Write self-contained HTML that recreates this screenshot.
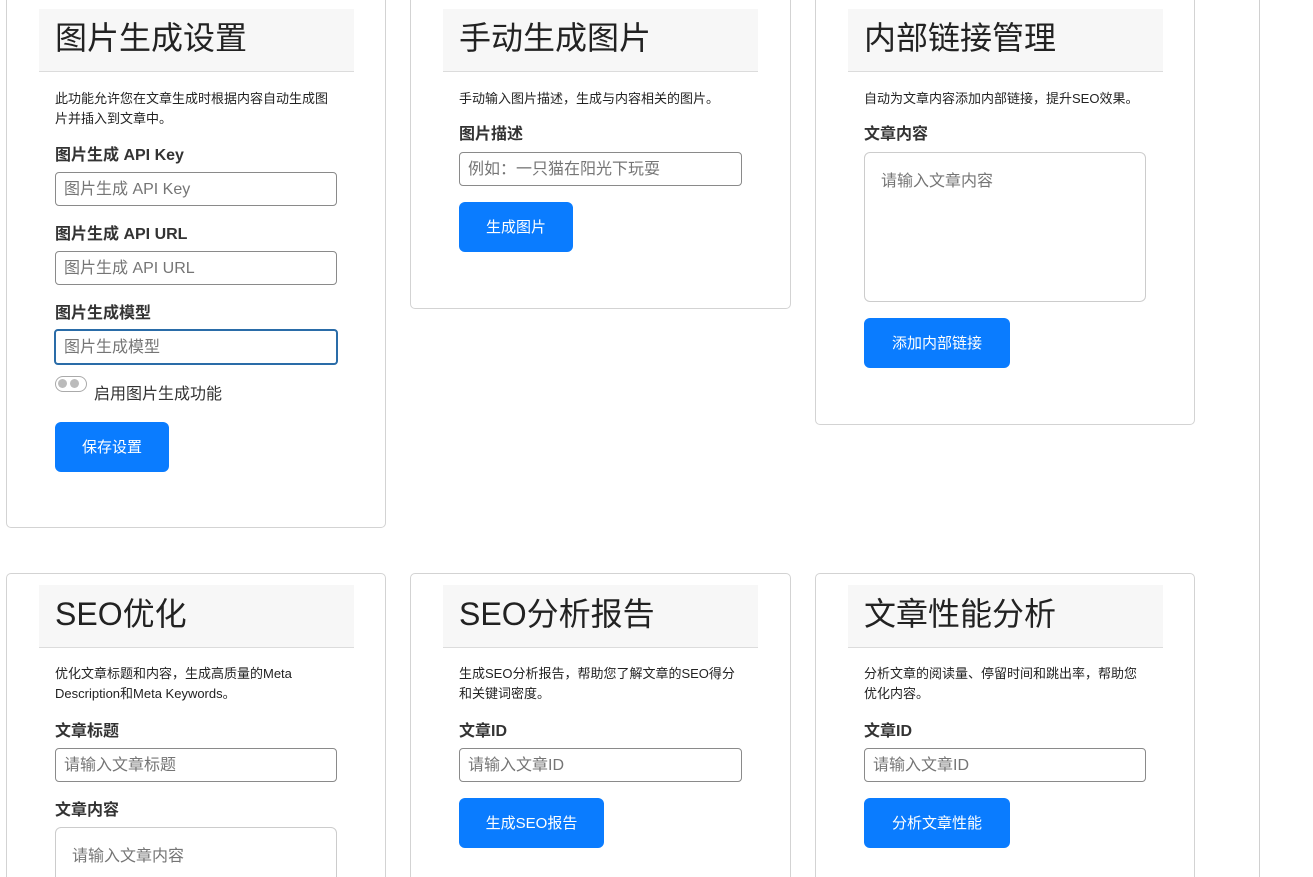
<!DOCTYPE html>
<html><head><meta charset="utf-8"><style>
html,body{margin:0;width:1313px;height:877px;overflow:hidden}
body{background:#fff;position:relative;font-family:"Liberation Sans","Noto Sans CJK SC",sans-serif;color:#212529}
#w{position:absolute;left:0;top:0;width:1313px;height:877px;overflow:hidden}
.a{position:absolute}
.card{position:absolute;border:1px solid #d3d3d3;border-radius:5px;background:#fff;box-sizing:border-box}
.hd{position:absolute;background:#f7f7f7;border-bottom:1px solid #dcdcdc;height:63px;width:315px;box-sizing:border-box}
.hd span{position:absolute;left:16px;top:0;line-height:58px;font-size:32px;color:#222;white-space:nowrap}
.ds{position:absolute;font-size:13px;line-height:19.5px;width:280px;color:#222}
.lb{position:absolute;font-size:16px;font-weight:bold;line-height:20px;color:#333;white-space:nowrap}
.in{position:absolute;border:1px solid #8a8a8a;border-radius:4px;height:34px;box-sizing:border-box;font-size:16px;color:#757575;padding-left:8px;line-height:34px;white-space:nowrap}
.ta{position:absolute;border:1px solid #ccc;border-radius:6px;box-sizing:border-box;font-size:16px;color:#757575;padding:19px 16px;white-space:nowrap}
.bt{position:absolute;background:#0a7cff;color:#fff;border-radius:6px;height:50px;font-size:15px;line-height:52px;text-align:center}
</style></head><body><div id="w">
<div class="a" style="left:1259px;top:0;width:1px;height:877px;background:#d0d0d0"></div>

<div class="card" style="left:6px;top:-10px;width:380px;height:538px"></div>
<div class="hd" style="left:39px;top:9px"><span>图片生成设置</span></div>
<div class="ds" style="left:55px;top:89px">此功能允许您在文章生成时根据内容自动生成图片并插入到文章中。</div>
<div class="lb" style="left:55px;top:146px">图片生成 API Key</div>
<div class="in" style="left:55px;top:172px;width:282px">图片生成 API Key</div>
<div class="lb" style="left:55px;top:225px">图片生成 API URL</div>
<div class="in" style="left:55px;top:251px;width:282px">图片生成 API URL</div>
<div class="lb" style="left:55px;top:304px">图片生成模型</div>
<div class="in" style="left:54px;top:329px;width:284px;height:36px;border:2px solid #2a6ca8;padding-left:8px;line-height:34px">图片生成模型</div>
<div class="a" style="left:55px;top:376px;width:30px;height:14px;border:1px solid #aaa;border-radius:8px"></div>
<div class="a" style="left:58px;top:379px;width:9px;height:9px;border-radius:50%;background:#bbb"></div>
<div class="a" style="left:70px;top:379px;width:9px;height:9px;border-radius:50%;background:#bbb"></div>
<div class="a" style="left:94px;top:385px;font-size:16px;line-height:20px;color:#333">启用图片生成功能</div>
<div class="bt" style="left:55px;top:422px;width:114px">保存设置</div>

<div class="card" style="left:410px;top:-10px;width:381px;height:319px"></div>
<div class="hd" style="left:443px;top:9px"><span>手动生成图片</span></div>
<div class="ds" style="left:459px;top:89px;width:300px">手动输入图片描述，生成与内容相关的图片。</div>
<div class="lb" style="left:459px;top:125px">图片描述</div>
<div class="in" style="left:459px;top:152px;width:283px">例如：一只猫在阳光下玩耍</div>
<div class="bt" style="left:459px;top:202px;width:114px">生成图片</div>

<div class="card" style="left:815px;top:-10px;width:380px;height:435px"></div>
<div class="hd" style="left:848px;top:9px"><span>内部链接管理</span></div>
<div class="ds" style="left:864px;top:89px;width:300px">自动为文章内容添加内部链接，提升SEO效果。</div>
<div class="lb" style="left:864px;top:125px">文章内容</div>
<div class="ta" style="left:864px;top:152px;width:282px;height:150px;line-height:20px">请输入文章内容</div>
<div class="bt" style="left:864px;top:318px;width:146px">添加内部链接</div>

<div class="card" style="left:6px;top:573px;width:380px;height:330px"></div>
<div class="hd" style="left:39px;top:585px"><span>SEO优化</span></div>
<div class="ds" style="left:55px;top:664px">优化文章标题和内容，生成高质量的Meta Description和Meta Keywords。</div>
<div class="lb" style="left:55px;top:722px">文章标题</div>
<div class="in" style="left:55px;top:748px;width:282px">请输入文章标题</div>
<div class="lb" style="left:55px;top:801px">文章内容</div>
<div class="ta" style="left:55px;top:827px;width:282px;height:80px;line-height:20px">请输入文章内容</div>

<div class="card" style="left:410px;top:573px;width:381px;height:330px"></div>
<div class="hd" style="left:443px;top:585px"><span>SEO分析报告</span></div>
<div class="ds" style="left:459px;top:664px">生成SEO分析报告，帮助您了解文章的SEO得分和关键词密度。</div>
<div class="lb" style="left:459px;top:722px">文章ID</div>
<div class="in" style="left:459px;top:748px;width:283px">请输入文章ID</div>
<div class="bt" style="left:459px;top:798px;width:145px">生成SEO报告</div>

<div class="card" style="left:815px;top:573px;width:380px;height:330px"></div>
<div class="hd" style="left:848px;top:585px"><span>文章性能分析</span></div>
<div class="ds" style="left:864px;top:664px;width:280px">分析文章的阅读量、停留时间和跳出率，帮助您优化内容。</div>
<div class="lb" style="left:864px;top:722px">文章ID</div>
<div class="in" style="left:864px;top:748px;width:282px">请输入文章ID</div>
<div class="bt" style="left:864px;top:798px;width:146px">分析文章性能</div>
</div></body></html>
